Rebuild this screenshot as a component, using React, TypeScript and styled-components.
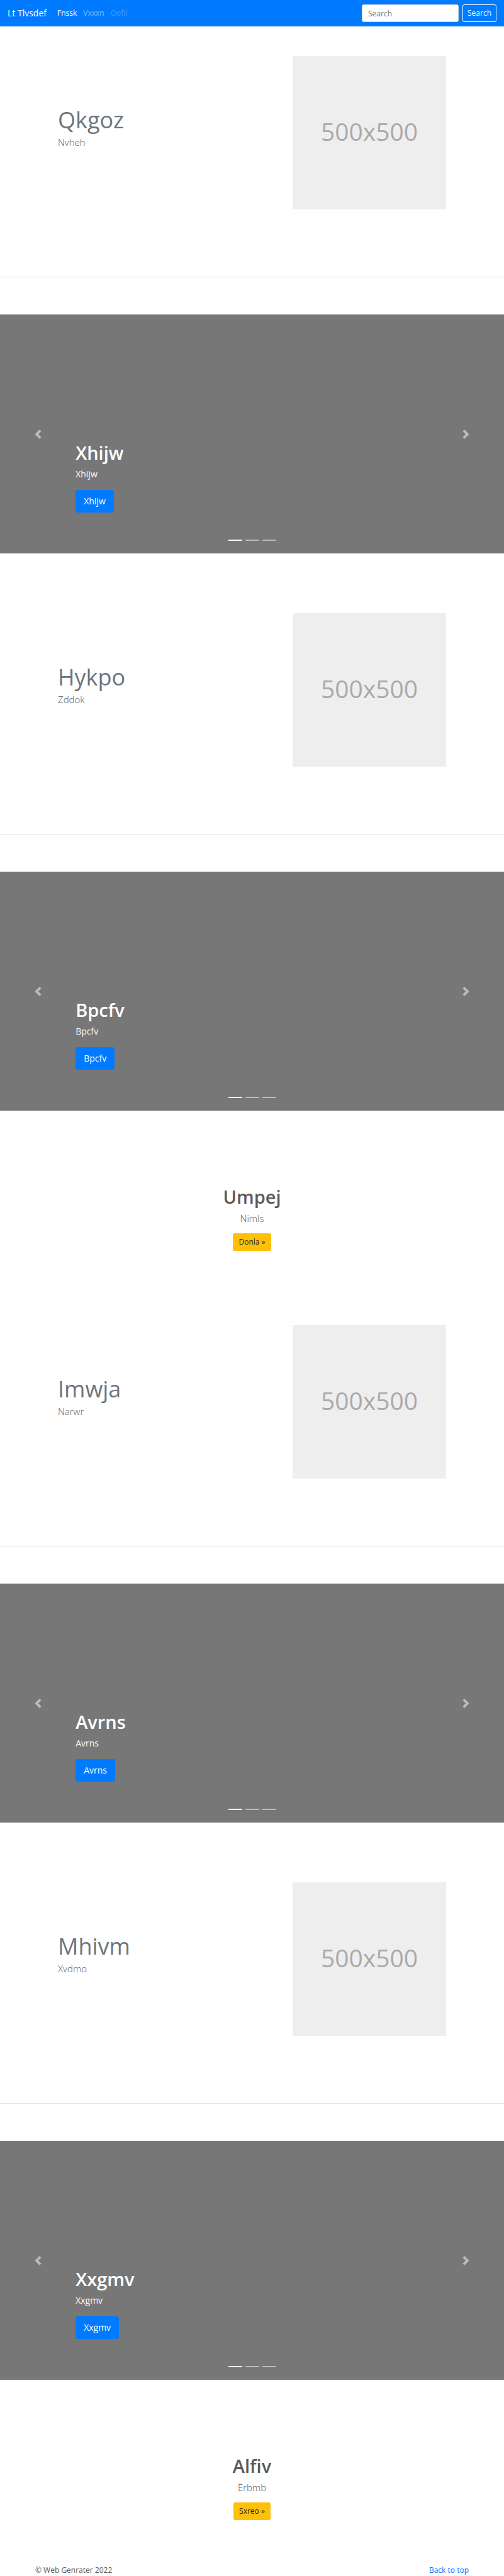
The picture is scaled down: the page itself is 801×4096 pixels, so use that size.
import React from 'react';
import styled, { createGlobalStyle } from 'styled-components';

const GlobalStyle = createGlobalStyle`
  *, *::before, *::after { box-sizing: border-box; }
  body {
    margin: 0;
    background: #fff;
    color: #5a5a5a;
    font-family: "Open Sans", "Noto Sans", sans-serif;
    font-size: 12px;
    line-height: 18px;
  }
  h1, h2, p { margin: 0; }
  a { text-decoration: none; }
`;

const Navbar = styled.header`
  display: flex;
  align-items: center;
  height: 42px;
  padding: 0 12px;
  background: #007bff;
`;

const Brand = styled.a`
  margin-right: 17px;
  color: #fff;
  font-size: 14px;
  line-height: 22px;
`;

const NavLinks = styled.nav`
  display: flex;
  flex: 1;
  gap: 10px;
`;

const NavLink = styled.a<{ $state?: 'active' | 'disabled' }>`
  color: ${({ $state }) =>
    $state === 'active' ? '#fff' : $state === 'disabled' ? 'rgba(255, 255, 255, 0.25)' : 'rgba(255, 255, 255, 0.5)'};
`;

const SearchForm = styled.form`
  display: flex;
  gap: 6px;
`;

const SearchInput = styled.input`
  width: 154px;
  height: 28px;
  padding: 0 9px;
  border: 1px solid #ced4da;
  border-radius: 3px;
  background: #fff;
  color: #495057;
  font: inherit;
  &::placeholder { color: #6c757d; opacity: 1; }
`;

const SearchButton = styled.button`
  width: 54px;
  height: 28px;
  padding: 0;
  border: 1px solid #f8f9fa;
  border-radius: 3px;
  background: transparent;
  color: #f8f9fa;
  font: inherit;
`;

const Feature = styled.section<{ $first?: boolean }>`
  display: flex;
  justify-content: space-between;
  align-items: flex-start;
  padding: ${({ $first }) => ($first ? 47 : 95)}px 92px 107px;
`;

const FeatureText = styled.div`
  padding-top: 83px;
`;

const FeatureTitle = styled.h2`
  margin-bottom: 6px;
  color: #6c757d;
  font-size: 36px;
  font-weight: 400;
  line-height: 37px;
`;

const Lead = styled.p`
  font-size: 15px;
  font-weight: 300;
  line-height: 22px;
`;

const Placeholder = styled.div`
  display: flex;
  align-items: center;
  justify-content: center;
  width: 244px;
  padding-bottom: 4px;
  aspect-ratio: 1;
  background: #eee;
  color: #aaa;
  font-size: 39px;
  line-height: 48px;
`;

const Divider = styled.hr`
  height: 1px;
  margin: 0 0 59px;
  border: 0;
  background: #e5e5e5;
`;

const Slider = styled.section`
  position: relative;
  display: grid;
  grid-template-columns: 15% 1fr 15%;
  height: 380px;
  background: #777;
  color: #fff;
`;

const Arrow = styled.button`
  display: flex;
  align-items: center;
  justify-content: center;
  padding: 0;
  border: 0;
  background: none;
  color: #fff;
  opacity: 0.5;
`;

const Caption = styled.div`
  display: flex;
  flex-direction: column;
  align-items: flex-start;
  justify-content: flex-end;
  padding-bottom: 65px;
`;

const Title = styled.h1`
  margin-bottom: 5px;
  font-size: 29px;
  font-weight: 600;
  line-height: 36px;
`;

const CaptionText = styled.p`
  margin-bottom: 14px;
  font-size: 14px;
  line-height: 22px;
`;

const PrimaryLink = styled.a`
  padding: 7px 13px;
  border-radius: 4px;
  background: #007bff;
  color: #fff;
  font-size: 14px;
  line-height: 22px;
`;

const Indicators = styled.div`
  position: absolute;
  right: 0;
  bottom: 20px;
  left: 0;
  display: flex;
  justify-content: center;
  gap: 5px;
`;

const Indicator = styled.button<{ $active?: boolean }>`
  width: 22px;
  height: 2px;
  padding: 0;
  border: 0;
  background: #fff;
  opacity: ${({ $active }) => ($active ? 1 : 0.5)};
`;

const Callout = styled.section<{ $last?: boolean }>`
  display: flex;
  flex-direction: column;
  align-items: center;
  padding: 119px 0 ${({ $last }) => ($last ? 71 : 23)}px;
`;

const WarningLink = styled.a`
  margin-top: 13px;
  padding: 5px 9px;
  border-radius: 3px;
  background: #ffc107;
  color: #212529;
`;

const Footer = styled.footer`
  display: flex;
  justify-content: space-between;
  padding: 0 56px;
`;

const FooterLink = styled.a`
  color: #007bff;
`;

const Chevron = ({ next }: { next?: boolean }) => (
  <svg width="15" height="15" viewBox="0 0 8 8" fill="currentColor" aria-hidden="true">
    <path
      d={
        next
          ? 'M2.75 0l-1.5 1.5 2.5 2.5-2.5 2.5 1.5 1.5 4-4-4-4z'
          : 'M5.25 0l-4 4 4 4 1.5-1.5-2.5-2.5 2.5-2.5-1.5-1.5z'
      }
    />
  </svg>
);

const FeatureBlock = ({ title, text, first }: { title: string; text: string; first?: boolean }) => (
  <>
    <Feature $first={first}>
      <FeatureText>
        <FeatureTitle>{title}</FeatureTitle>
        <Lead>{text}</Lead>
      </FeatureText>
      <Placeholder>500x500</Placeholder>
    </Feature>
    <Divider />
  </>
);

const Carousel = ({ name }: { name: string }) => (
  <Slider aria-label={name}>
    <Arrow type="button" aria-label="Previous">
      <Chevron />
    </Arrow>
    <Caption>
      <Title>{name}</Title>
      <CaptionText>{name}</CaptionText>
      <PrimaryLink href="#">{name}</PrimaryLink>
    </Caption>
    <Arrow type="button" aria-label="Next">
      <Chevron next />
    </Arrow>
    <Indicators>
      <Indicator type="button" aria-label="Slide 1" $active />
      <Indicator type="button" aria-label="Slide 2" />
      <Indicator type="button" aria-label="Slide 3" />
    </Indicators>
  </Slider>
);

const CalloutBlock = ({ title, text, action, last }: { title: string; text: string; action: string; last?: boolean }) => (
  <Callout $last={last}>
    <Title>{title}</Title>
    <Lead>{text}</Lead>
    <WarningLink href="#">{action} »</WarningLink>
  </Callout>
);

export default function App() {
  return (
    <>
      <GlobalStyle />
      <Navbar>
        <Brand href="#">Lt Tlvsdef</Brand>
        <NavLinks>
          <NavLink href="#" $state="active">Fnssk</NavLink>
          <NavLink href="#">Vxxxn</NavLink>
          <NavLink href="#" $state="disabled" aria-disabled="true">Oofil</NavLink>
        </NavLinks>
        <SearchForm>
          <SearchInput type="text" placeholder="Search" aria-label="Search" />
          <SearchButton type="button">Search</SearchButton>
        </SearchForm>
      </Navbar>
      <main>
        <FeatureBlock title="Qkgoz" text="Nvheh" first />
        <Carousel name="Xhijw" />
        <FeatureBlock title="Hykpo" text="Zddok" />
        <Carousel name="Bpcfv" />
        <CalloutBlock title="Umpej" text="Nimls" action="Donla" />
        <FeatureBlock title="Imwja" text="Narwr" />
        <Carousel name="Avrns" />
        <FeatureBlock title="Mhivm" text="Xvdmo" />
        <Carousel name="Xxgmv" />
        <CalloutBlock title="Alfiv" text="Erbmb" action="Sxreo" last />
      </main>
      <Footer>
        <span>© Web Genrater 2022</span>
        <FooterLink href="#">Back to top</FooterLink>
      </Footer>
    </>
  );
}
